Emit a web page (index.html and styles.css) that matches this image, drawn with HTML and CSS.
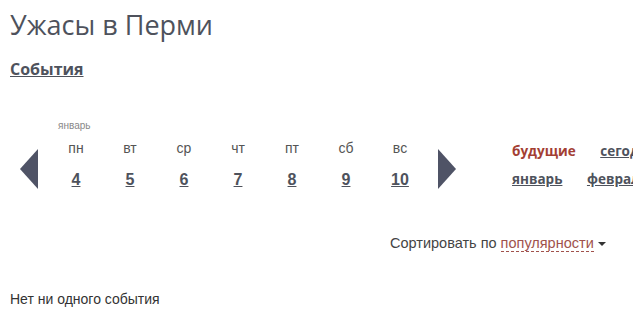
FILE: index.html
```html
<!DOCTYPE html>
<html>

<head>
    <title>Ужасы в Перми</title>
    <meta charset="UTF-8">
    <link rel="stylesheet" href="styles.css">
</head>

<body>
    <h1 class="titulo">Ужасы в Перми</h1>
    <a href="#" class="secao">События</a>

    <div class="calendario">
        <a href="#" class="seta seta_esq"></a>
        <div class="dias">
            <div class="dia">
                <span class="mes">январь</span>
                <span class="nome">пн</span>
                <a href="#" class="numero">4</a>
            </div>
            <div class="dia">
                <span class="nome">вт</span>
                <a href="#" class="numero">5</a>
            </div>
            <div class="dia">
                <span class="nome">ср</span>
                <a href="#" class="numero">6</a>
            </div>
            <div class="dia">
                <span class="nome">чт</span>
                <a href="#" class="numero">7</a>
            </div>
            <div class="dia">
                <span class="nome">пт</span>
                <a href="#" class="numero">8</a>
            </div>
            <div class="dia">
                <span class="nome">сб</span>
                <a href="#" class="numero">9</a>
            </div>
            <div class="dia">
                <span class="nome">вс</span>
                <a href="#" class="numero">10</a>
            </div>
        </div>
        <a href="#" class="seta seta_dir"></a>
        <div class="periodos">
            <div class="linha">
                <a href="#" class="ativo">будущие</a>
                <a href="#">сегодня</a>
            </div>
            <div class="linha">
                <a href="#">январь</a>
                <a href="#">февраль</a>
            </div>
        </div>
    </div>

    <div class="ordenar">
        Сортировать по <a href="#" class="criterio">популярности</a><span class="triangulo"></span>
    </div>

    <p class="vazio">Нет ни одного события</p>
</body>

</html>
```

FILE: styles.css
```css
* {
    margin: 0;
    padding: 0;
    box-sizing: border-box;
}

body {
    padding: 8px 10px;
    font-family: "Liberation Sans", Arial, sans-serif;
    color: #444;
    overflow: hidden;
    width: 633px;
}

.titulo {
    font-family: "Open Sans", sans-serif;
    font-weight: normal;
    font-size: 27px;
    line-height: 34px;
    color: #4e525c;
}

.secao {
    display: inline-block;
    margin-top: 16px;
    font-family: "Open Sans", sans-serif;
    font-weight: bold;
    font-size: 16px;
    color: #4e525c;
}

.calendario {
    display: flex;
    align-items: center;
    margin-top: 37px;
    width: 800px;
}

.seta {
    display: block;
    width: 0;
    height: 0;
    border-top: 20px solid transparent;
    border-bottom: 20px solid transparent;
    margin-top: 28px;
}

.seta_esq {
    margin-left: 10px;
    border-right: 18px solid #4f5366;
}

.seta_dir {
    border-left: 18px solid #4f5366;
}

.dias {
    display: flex;
    margin-left: 11px;
    margin-right: 11px;
}

.dia {
    width: 54px;
    display: flex;
    flex-direction: column;
    align-items: center;
    padding-top: 20px;
    position: relative;
}

.mes {
    position: absolute;
    top: 0;
    left: 9px;
    font-size: 10px;
    color: #888;
}

.nome {
    font-size: 14px;
    color: #555;
    line-height: 16px;
}

.numero {
    margin-top: 14px;
    font-size: 16px;
    font-weight: bold;
    color: #4e525c;
    line-height: 20px;
}

.periodos {
    margin-left: 56px;
    margin-top: 20px;
    font-family: "Open Sans", sans-serif;
    font-weight: bold;
    font-size: 13.5px;
}

.linha {
    line-height: 28px;
}

.linha a {
    color: #4e525c;
    margin-right: 21px;
}

.linha a.ativo {
    color: #a33e33;
    text-decoration: none;
}

.ordenar {
    margin-top: 42px;
    padding-left: 380px;
    font-size: 14.5px;
    color: #444;
}

.criterio {
    color: #a0524c;
    text-decoration: none;
    border-bottom: 1px dashed #a0524c;
}

.triangulo {
    display: inline-block;
    margin-left: 4px;
    vertical-align: middle;
    border-top: 4px solid #333;
    border-left: 4px solid transparent;
    border-right: 4px solid transparent;
}

.vazio {
    margin-top: 40px;
    font-size: 14px;
    color: #333;
}
```
